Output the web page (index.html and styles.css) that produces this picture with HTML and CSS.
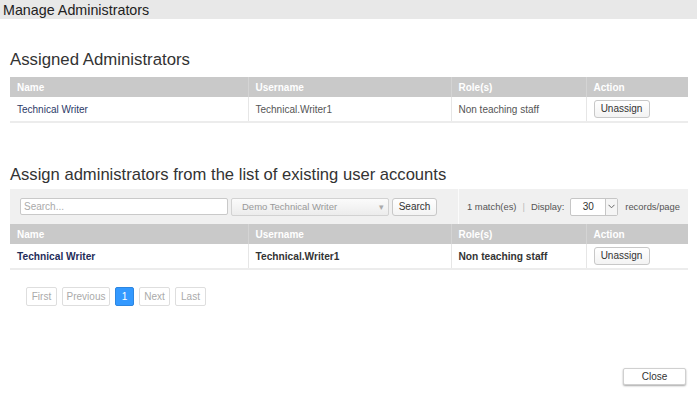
FILE: index.html
```html
<!DOCTYPE html>
<html>
<head>
<meta charset="utf-8">
<link rel="stylesheet" href="styles.css">
</head>
<body>
<div class="dialog">
  <div class="titlebar">Manage Administrators</div>
  <div class="content">
    <h2 class="heading first">Assigned Administrators</h2>
    <table class="grid">
      <colgroup><col class="c1"><col class="c2"><col class="c3"><col class="c4"></colgroup>
      <thead><tr><th>Name</th><th>Username</th><th>Role(s)</th><th>Action</th></tr></thead>
      <tbody><tr><td class="name">Technical Writer</td><td>Technical.Writer1</td><td>Non teaching staff</td><td><button class="btn unassign">Unassign</button></td></tr></tbody>
    </table>

    <h2 class="heading second">Assign administrators from the list of existing user accounts</h2>
    <div class="toolbar">
      <div class="tools-left">
        <div class="input">Search...</div>
        <div class="combo"><span>Demo Technical Writer</span><span class="caret">▾</span></div>
        <button class="btn search">Search</button>
      </div>
      <div class="tools-right">
        <span>1 match(es)</span><span class="pipe">|</span><span>Display:</span>
        <div class="select"><span class="val">30</span><span class="arrow"><svg width="7" height="5" viewBox="0 0 7 5"><path d="M0.5 0.8 L3.5 3.8 L6.5 0.8" fill="none" stroke="#666" stroke-width="1"/></svg></span></div>
        <span>records/page</span>
      </div>
    </div>
    <table class="grid bold">
      <colgroup><col class="c1"><col class="c2"><col class="c3"><col class="c4"></colgroup>
      <thead><tr><th>Name</th><th>Username</th><th>Role(s)</th><th>Action</th></tr></thead>
      <tbody><tr><td class="name">Technical Writer</td><td>Technical.Writer1</td><td>Non teaching staff</td><td><button class="btn unassign">Unassign</button></td></tr></tbody>
    </table>

    <div class="pager">
      <span class="pg w31">First</span>
      <span class="pg w48">Previous</span>
      <span class="pg w19 active">1</span>
      <span class="pg w31">Next</span>
      <span class="pg w31">Last</span>
    </div>
  </div>
  <div class="footer"><button class="btn close">Close</button></div>
</div>
</body>
</html>
```
FILE: styles.css
```css
html, body { margin: 0; padding: 0; background: #fff; }
body { font-family: "Liberation Sans", Arial, sans-serif; color: #333; width: 700px; height: 399px; overflow: hidden; }
.dialog { width: 700px; height: 399px; display: flex; flex-direction: column; }
.titlebar { width: 697px; height: 19px; background: #e8e8e8; font-size: 14.3px; line-height: 20px; padding-left: 3px; box-sizing: border-box; color: #222; flex-shrink: 0; }
.content { padding: 0 12px 0 10px; flex: 1; }
.heading { font-weight: normal; font-size: 16.8px; line-height: 20px; color: #333; margin: 0; }
.heading.first { margin-top: 31px; margin-bottom: 7px; }
.heading.second { font-size: 16.6px; margin-top: 42px; margin-bottom: 4px; }
.grid { width: 678px; border-collapse: collapse; table-layout: fixed; font-size: 10px; }
.c1 { width: 238px; } .c2 { width: 203px; } .c3 { width: 135px; } .c4 { width: 102px; }
.grid th { background: #c9c9c9; color: #fff; font-weight: bold; text-align: left; height: 20px; padding: 0 0 0 7px; border-left: 1px solid #d4d4d4; box-sizing: border-box; }
.grid th:first-child, .grid td:first-child { border-left: none; }
.grid td { height: 25px; padding: 0 0 0 7px; border-left: 1px solid #e6e6e6; border-bottom: 2px solid #ececec; color: #555; box-sizing: border-box; }
.grid td.name { color: #2b3a67; }
.grid.bold td { font-weight: bold; color: #333; font-size: 10.2px; }
.grid.bold td.name { color: #1f2d5a; }
.btn { font-family: "Liberation Sans", Arial, sans-serif; font-size: 10px; color: #333; background: linear-gradient(#fff, #f3f3f3); border: 1px solid #c8c8c8; border-radius: 3px; height: 18px; padding: 0; line-height: 16px; }
.btn.unassign { width: 56px; font-weight: normal; }
.toolbar { height: 35px; background: #f0f0f0; display: flex; align-items: center; font-size: 10px; }
.tools-left { display: flex; align-items: center; gap: 3px; padding-left: 10px; width: 449px; height: 100%; box-sizing: border-box; border-right: 1px solid #fbfbfb; }
.input { width: 208px; height: 17px; box-sizing: border-box; border: 1px solid #c9c9c9; border-radius: 2px; background: #fff; color: #aaa; font-size: 10px; line-height: 15px; padding-left: 3px; }
.combo { width: 158px; height: 18px; box-sizing: border-box; border: 1px solid #d2d2d2; border-radius: 2px; background: linear-gradient(#fbfbfb, #ececec); color: #999; font-size: 9.5px; display: flex; justify-content: space-between; align-items: center; padding: 0 4px 0 10px; }
.caret { color: #aaa; font-size: 9px; }
.btn.search { width: 45px; }
.tools-right { display: flex; align-items: center; padding-left: 8px; color: #555; font-size: 9.4px; white-space: nowrap; }
.pipe { color: #bbb; margin: 0 6px; }
.select { margin-left: 6px; margin-right: 7px; width: 48px; height: 18px; box-sizing: border-box; border: 1px solid #c6c6c6; border-radius: 2px; background: #fff; display: flex; align-items: center; font-size: 10px; }
.select .val { flex: 1; text-align: center; color: #333; }
.select .arrow { width: 11px; height: 16px; border-left: 1px solid #c6c6c6; display: flex; align-items: center; justify-content: center; background: #f5f5f5; }
.pager { display: flex; gap: 5px; margin-top: 17px; padding-left: 16px; }
.pg { height: 19px; box-sizing: border-box; border: 1px solid #dedede; border-radius: 2px; color: #aaa; font-size: 10px; line-height: 17px; text-align: center; }
.w31 { width: 31px; } .w48 { width: 48px; } .w19 { width: 19px; }
.pg.active { background: #3399ff; border-color: #2d86e0; color: #fff; }
.footer { display: flex; justify-content: flex-end; padding: 0 14px 14px 0; }
.btn.close { width: 63px; height: 17px; border-radius: 2px; box-shadow: 0 1px 2px rgba(0,0,0,0.35); border-color: #d0d0d0; background: #fff; }
```
